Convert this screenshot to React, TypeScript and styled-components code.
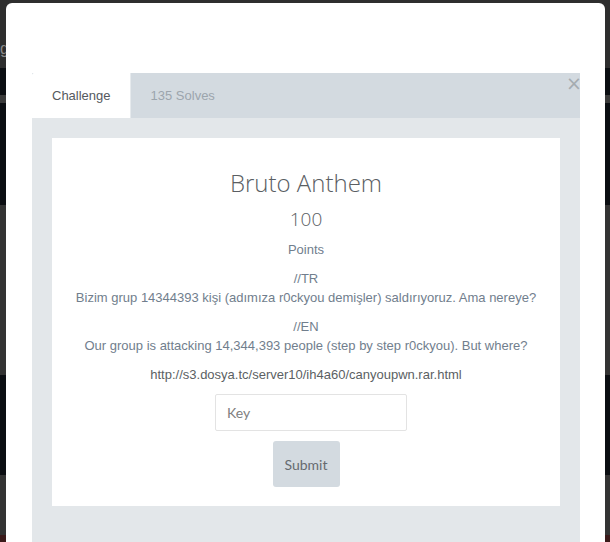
import React from "react";
import styled, { createGlobalStyle } from "styled-components";

const GlobalStyle = createGlobalStyle`
  html, body { margin: 0; padding: 0; }
  body {
    background: #0b0e12;
    font-family: "Liberation Sans", Arial, sans-serif;
    overflow: hidden;
  }
`;

const Page = styled.div`
  position: relative;
  width: 610px;
  height: 542px;
  overflow: hidden;
`;

const Backdrop = styled.div`
  display: flex;
  flex-direction: column;
  height: 542px;
`;

const Band = styled.div<{ $h: number; $c: string }>`
  height: ${(p) => p.$h}px;
  flex: 0 0 auto;
  background: ${(p) => p.$c};
`;

const TopBand = styled.div`
  height: 68px;
  background: #2e2e2e;
  box-sizing: border-box;
  padding-top: 40px;
  color: #8a8a8a;
  font-size: 16px;
`;

const Modal = styled.div`
  position: absolute;
  top: 3px;
  left: 6px;
  width: 599px;
  height: 580px;
  background: #ffffff;
  border-radius: 6px;
  box-sizing: border-box;
  padding: 70px 25px 0 26px;
`;

const TabBar = styled.div`
  position: relative;
  display: flex;
  height: 45px;
  background: #d3dae0;
`;

const Tab = styled.div<{ $active?: boolean }>`
  display: flex;
  align-items: center;
  padding: 0 20px 0 20px;
  font-size: 13px;
  color: ${(p) => (p.$active ? "#55595e" : "#9ca5ad")};
  background: ${(p) => (p.$active ? "#ffffff" : "transparent")};
  border-top-left-radius: ${(p) => (p.$active ? "2px" : "0")};
  box-shadow: ${(p) => (p.$active ? "inset -1px 0 0 #e6eaed" : "none")};
`;

const Close = styled.span`
  position: absolute;
  top: 0px;
  right: -2px;
  font-family: "DejaVu Sans", sans-serif;
  font-size: 19px;
  line-height: 20px;
  color: #a5abb0;
`;

const Panel = styled.div`
  background: #e3e7ea;
  padding: 20px 20px 40px;
`;

const Card = styled.div`
  background: #ffffff;
  text-align: center;
  padding: 30px 20px 19px;
  display: flex;
  flex-direction: column;
  align-items: center;
`;

const Title = styled.h2`
  margin: 0;
  font-family: "Open Sans", sans-serif;
  font-weight: 300;
  font-size: 24px;
  line-height: 30px;
  color: #5a5e63;
`;

const Value = styled.div`
  margin-top: 9px;
  font-family: "Open Sans", sans-serif;
  font-weight: 300;
  font-size: 19px;
  line-height: 24px;
  color: #5a5e63;
`;

const Text = styled.p<{ $gap?: number; $dark?: boolean }>`
  margin: ${(p) => p.$gap ?? 10}px 0 0;
  font-size: 13px;
  line-height: 19px;
  color: ${(p) => (p.$dark ? "#5b5f63" : "#717e8d")};
`;

const KeyInput = styled.input`
  margin: 10px 0 0 10px;
  width: 192px;
  height: 37px;
  box-sizing: border-box;
  border: 1px solid #e3e3e3;
  border-radius: 2px;
  padding: 0 11px;
  font-family: "Lato", sans-serif;
  font-size: 14px;
  color: #555;
  outline: none;
  &::placeholder { color: #808080; }
`;

const SubmitButton = styled.button`
  margin-top: 10px;
  width: 67px;
  height: 46px;
  border: none;
  border-radius: 3px;
  background: #d3dae0;
  font-family: "Lato", sans-serif;
  font-size: 14px;
  color: #666a6f;
  cursor: pointer;
`;

export default function App() {
  return (
    <Page>
      <GlobalStyle />
      <Backdrop>
        <TopBand>gg</TopBand>
        <Band $h={27} $c="#0b0e12" />
        <Band $h={8} $c="#3a3a3a" />
        <Band $h={102} $c="#0b0e12" />
        <Band $h={170} $c="#333333" />
        <Band $h={100} $c="#0b0e12" />
        <Band $h={60} $c="#333333" />
        <Band $h={7} $c="#3b1a1a" />
      </Backdrop>
      <Modal>
        <TabBar>
          <Tab $active>Challenge</Tab>
          <Tab>135 Solves</Tab>
          <Close>×</Close>
        </TabBar>
        <Panel>
          <Card>
            <Title>Bruto Anthem</Title>
            <Value>100</Value>
            <Text $gap={9}>Points</Text>
            <Text>
              //TR
              <br />
              Bizim grup 14344393 kişi (adımıza r0ckyou demişler) saldırıyoruz. Ama nereye?
            </Text>
            <Text>
              //EN
              <br />
              Our group is attacking 14,344,393 people (step by step r0ckyou). But where?
            </Text>
            <Text $dark>http://s3.dosya.tc/server10/ih4a60/canyoupwn.rar.html</Text>
            <KeyInput placeholder="Key" />
            <SubmitButton>Submit</SubmitButton>
          </Card>
        </Panel>
      </Modal>
    </Page>
  );
}
